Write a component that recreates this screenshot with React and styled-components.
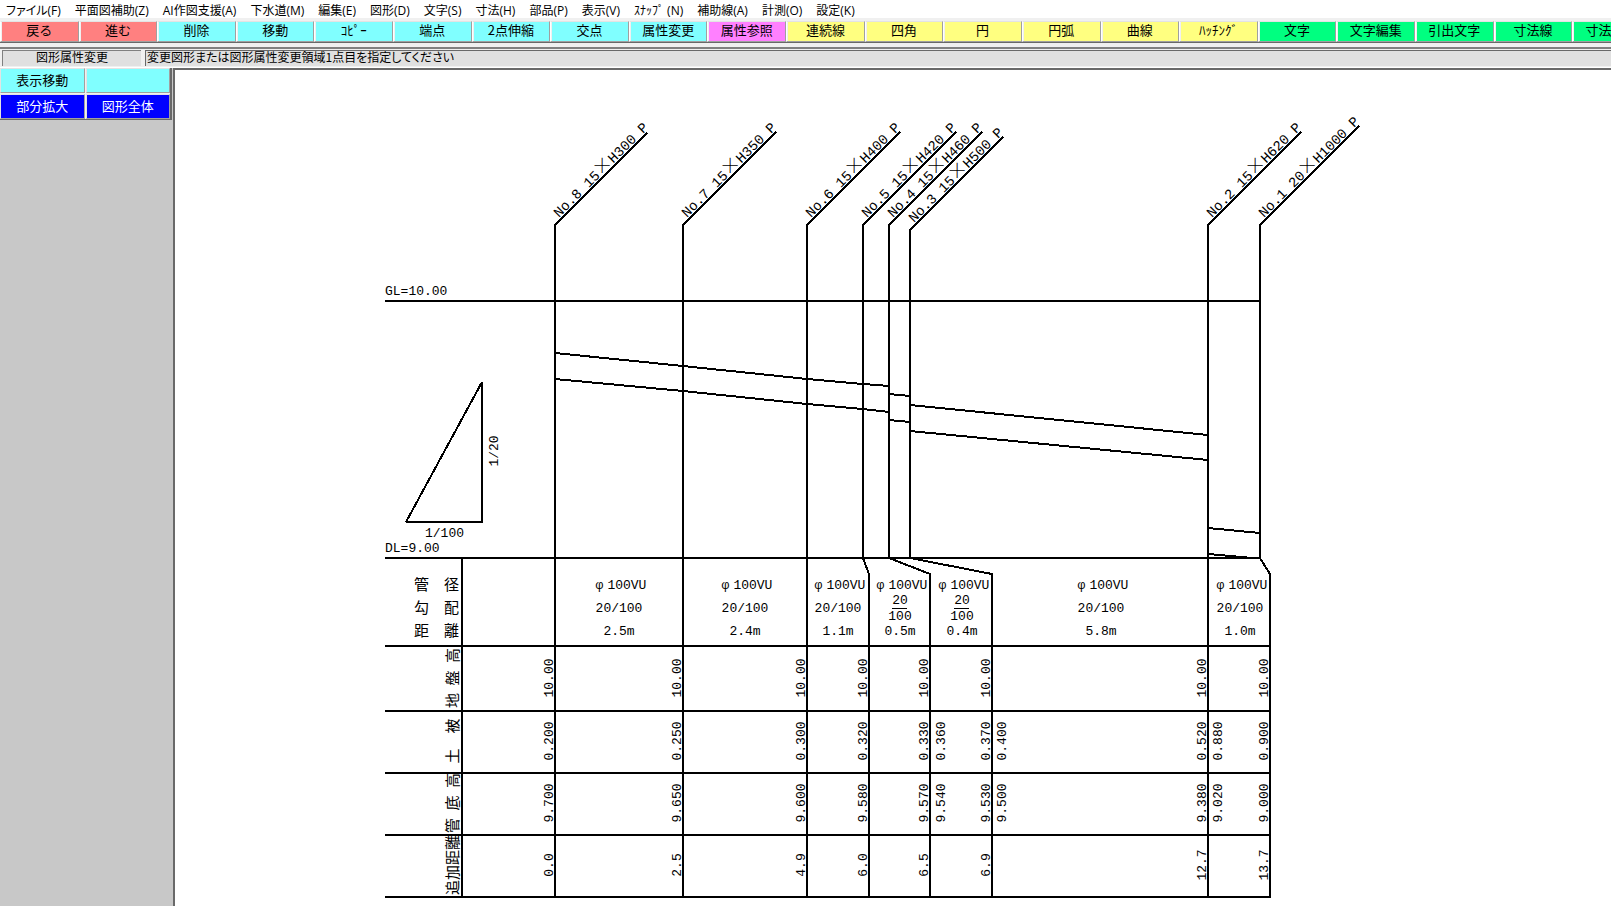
import React from "react";
import styled, { createGlobalStyle } from "styled-components";

const menus = [
  "ファイル(F)", "平面図補助(Z)", "AI作図支援(A)", "下水道(M)", "編集(E)",
  "図形(D)", "文字(S)", "寸法(H)", "部品(P)", "表示(V)", "ｽﾅｯﾌﾟ (N)",
  "補助線(A)", "計測(O)", "設定(K)",
];

const tools = [
  { color: "#ff8080", names: ["戻る", "進む"] },
  { color: "#80ffff", names: ["削除", "移動", "ｺﾋﾟｰ", "端点", "2点伸縮", "交点", "属性変更"] },
  { color: "#ff80ff", names: ["属性参照"] },
  { color: "#ffff80", names: ["連続線", "四角", "円", "円弧", "曲線", "ﾊｯﾁﾝｸﾞ"] },
  { color: "#00ff80", names: ["文字", "文字編集", "引出文字", "寸法線", "寸法編集"] },
];

// x: position above the datum line, tableX: position in the table below it
const manholes = [
  { label: "No.8 15", size: "H300 P", x: 555, tableX: 555, bend: 225, reach: 92 },
  { label: "No.7 15", size: "H350 P", x: 683, tableX: 683, bend: 225, reach: 93 },
  { label: "No.6 15", size: "H400 P", x: 807, tableX: 807, bend: 225, reach: 93 },
  { label: "No.5 15", size: "H420 P", x: 863, tableX: 869, bend: 225, reach: 93 },
  { label: "No.4 15", size: "H460 P", x: 889, tableX: 930, bend: 225, reach: 93 },
  { label: "No.3 15", size: "H500 P", x: 910, tableX: 992, bend: 230, reach: 93 },
  { label: "No.2 15", size: "H620 P", x: 1208, tableX: 1208, bend: 225, reach: 93 },
  { label: "No.1 20", size: "H1000 P", x: 1260, tableX: 1270, bend: 225, reach: 99 },
];

const pipes = [
  { x: 619, length: "2.5m" },
  { x: 745, length: "2.4m" },
  { x: 838, length: "1.1m" },
  { x: 900, length: "0.5m", stacked: true },
  { x: 962, length: "0.4m", stacked: true },
  { x: 1101, length: "5.8m" },
  { x: 1240, length: "1.0m" },
];

const rows = [
  {
    title: "地\u2002盤\u2002高", y: 678,
    values: ["10.00", "10.00", "10.00", "10.00", "10.00", "10.00", "10.00", "10.00"],
  },
  {
    title: "土\u3000被", y: 741,
    values: ["0.200", "0.250", "0.300", "0.320", "0.330", "0.370", "0.520", "0.900"],
    extra: [[945, "0.360"], [1006, "0.400"], [1222, "0.880"]],
  },
  {
    title: "管\u2002底\u2002高", y: 803,
    values: ["9.700", "9.650", "9.600", "9.580", "9.570", "9.530", "9.380", "9.000"],
    extra: [[945, "9.540"], [1006, "9.500"], [1222, "9.020"]],
  },
  {
    title: "追加距離", y: 865,
    values: ["0.0", "2.5", "4.9", "6.0", "6.5", "6.9", "12.7", "13.7"],
  },
];

const slopes = [
  "555,353 683,366 807,379 863,384 889,386",
  "555,379 683,391 807,404 863,409 889,412",
  "889,394 910,396",
  "889,420 910,422",
  "910,405 1208,435",
  "910,431 1208,460",
  "1208,528 1260,533",
  "1208,554 1252,558",
];

const turned = (x, y) => `translate(${x} ${y}) rotate(-90)`;

function Manhole({ label, size, x, tableX, bend, reach }) {
  const points = [[x + reach, bend - reach], [x, bend], [x, 558]];
  if (tableX !== x) {
    points.push([tableX, 574]);
  }
  points.push([tableX, 897]);

  return (
    <g>
      <Line points={points.join(" ")} />
      <Label transform={`translate(${x + 4} ${bend - 7}) rotate(-45)`}>
        {label}<Times>×</Times>{size}
      </Label>
    </g>
  );
}

function Pipe({ x, length, stacked }) {
  return (
    <g>
      <Note x={x + 2} y="589" $middle>φ<tspan dx="4">100VU</tspan></Note>
      {stacked ? (
        <>
          <Note x={x} y="604" $middle>20</Note>
          <Rule points={`${x - 8},608 ${x + 7},608`} />
          <Note x={x} y="620" $middle>100</Note>
        </>
      ) : (
        <Note x={x} y="612" $middle>20/100</Note>
      )}
      <Note x={x} y="635" $middle>{length}</Note>
    </g>
  );
}

function Profile() {
  return (
    <Drawing viewBox="175 70 1436 832" role="img" aria-label="縦断図">
      <Line points="385,301 1260,301" />
      <Line points="385,558 1260,558" />
      {[646, 711, 773, 835, 897].map((y) => (
        <Line key={y} points={`385,${y} 1271,${y}`} />
      ))}
      <Line points="462,558 462,897" />
      <Line points="406,522 482,522 482,382 406,522" />
      {slopes.map((points) => <Line key={points} points={points} />)}

      <Note x="385" y="295">GL=10.00</Note>
      <Note x="385" y="552">DL=9.00</Note>
      <Note x="425" y="537">1/100</Note>
      <Note transform={turned(498, 451)} $middle>1/20</Note>

      <Title x="414" y="590">管　径</Title>
      <Title x="414" y="613">勾　配</Title>
      <Title x="414" y="636">距　離</Title>

      {manholes.map((m) => <Manhole key={m.label} {...m} />)}
      {pipes.map((p) => <Pipe key={p.x} {...p} />)}
      {rows.map((row) => (
        <g key={row.title}>
          <Title transform={turned(458, row.y)} $middle>{row.title}</Title>
          {row.values.map((value, i) => (
            <Note key={i} transform={turned(manholes[i].tableX - 2, row.y)} $middle>
              {value}
            </Note>
          ))}
          {(row.extra || []).map(([x, value]) => (
            <Note key={x} transform={turned(x, row.y)} $middle>{value}</Note>
          ))}
        </g>
      ))}
    </Drawing>
  );
}

function App() {
  return (
    <Page>
      <GlobalStyle />
      <MenuBar>
        {menus.map((name) => <MenuItem key={name}>{name}</MenuItem>)}
      </MenuBar>
      <ToolBar>
        {tools.map(({ color, names }) =>
          names.map((name) => <ToolButton key={name} $color={color}>{name}</ToolButton>)
        )}
      </ToolBar>
      <StatusBar>
        <Command>図形属性変更</Command>
        <Message>変更図形または図形属性変更領域1点目を指定してください</Message>
      </StatusBar>
      <Body>
        <Side>
          <ViewButtons>
            <ViewButton>表示移動</ViewButton>
            <ViewButton aria-label="空き" />
            <ViewButton $dark>部分拡大</ViewButton>
            <ViewButton $dark>図形全体</ViewButton>
          </ViewButtons>
        </Side>
        <Canvas>
          <Profile />
        </Canvas>
      </Body>
    </Page>
  );
}

const GlobalStyle = createGlobalStyle`
  * {
    box-sizing: border-box;
  }
  body {
    margin: 0;
    background: #f0f0f0;
    color: #000;
    font-family: "Noto Sans CJK JP", sans-serif;
  }
  button {
    font-family: inherit;
    color: inherit;
    padding: 0;
    margin: 0;
  }
`;

const Page = styled.div`
  display: flex;
  flex-direction: column;
  min-height: 100vh;
`;

const MenuBar = styled.nav`
  display: flex;
  gap: 14px;
  height: 18px;
  padding-left: 6px;
  background: #fff;
`;

const MenuItem = styled.button`
  border: none;
  background: none;
  font-family: "Open Sans", "Noto Sans CJK JP", sans-serif;
  font-size: 12px;
  line-height: 18px;
  padding-top: 2px;
  font-feature-settings: "palt";
  white-space: nowrap;
`;

const ToolBar = styled.div`
  display: flex;
  height: 25px;
  padding-top: 3px;
  overflow: hidden;
  border-bottom: 1px solid #696969;
  margin-bottom: 4px;
`;

const ToolButton = styled.button`
  flex: 0 0 4.88%;
  border: 1px solid;
  border-color: #e3e3e3 #a0a0a0 #a0a0a0 #fff;
  box-shadow: inset 1px 0 #f0f0f0;
  background: ${(props) => props.$color};
  font-size: 13px;
  line-height: 16px;
  padding-bottom: 3px;
  white-space: nowrap;
`;

const StatusBar = styled.div`
  display: flex;
  gap: 4px;
  height: 21px;
  padding: 1px 0 1px 2px;
  border-top: 2px solid #808080;
  border-bottom: 1px solid #fff;
  font-size: 12px;
  line-height: 12px;
  font-feature-settings: "palt";
`;

const Command = styled.div`
  width: 139px;
  border: 1px solid #808080;
  border-width: 1px 0 0 1px;
  background: #e0e0e0;
  text-align: center;
`;

const Message = styled.output`
  flex: 1;
  padding-left: 1px;
  border: 1px solid #696969;
  border-width: 1px 0 0 1px;
  background: #e0e0e0;
`;

const Body = styled.main`
  display: flex;
  flex: 1;
`;

const Side = styled.aside`
  flex: 0 0 173px;
  background: #c8c8c8;
`;

const ViewButtons = styled.div`
  display: grid;
  grid-template-columns: 1fr 1fr;
  grid-auto-rows: 25px;
  gap: 1px;
  margin-right: 1px;
  background: #f0f0f0;
  border: 1px solid #696969;
  border-width: 0 2px 1px 0;
`;

const ViewButton = styled.button`
  border: 1px solid;
  border-color: #e3e3e3 #a0a0a0 #a0a0a0 #e3e3e3;
  background: ${(props) => (props.$dark ? "#0000ff" : "#80ffff")};
  color: ${(props) => (props.$dark ? "#fff" : "#000")};
  font-size: 13px;
  line-height: 20px;
  padding-bottom: 2px;
`;

const Canvas = styled.section`
  flex: 1;
  min-width: 0;
  border: solid #696969;
  border-width: 2px 0 0 2px;
  background: #fff;
`;

const Drawing = styled.svg`
  display: block;
  width: 100%;
  height: auto;
`;

const Line = styled.polyline`
  fill: none;
  stroke: #000;
  stroke-width: 2px;
  shape-rendering: crispEdges;
`;

const Rule = styled(Line)`
  stroke-width: 1px;
`;

const Note = styled.text`
  font-family: "Liberation Mono", monospace;
  font-size: 13px;
  text-anchor: ${(props) => (props.$middle ? "middle" : "start")};
  white-space: pre;
`;

const Label = styled(Note)`
  font-size: 14px;
`;

const Times = styled.tspan`
  font-family: "Noto Sans CJK JP", sans-serif;
  font-size: 18px;
  font-weight: 300;
`;

const Title = styled(Note)`
  font-family: "Noto Sans CJK JP", sans-serif;
  font-size: 15px;
`;

export default App;
